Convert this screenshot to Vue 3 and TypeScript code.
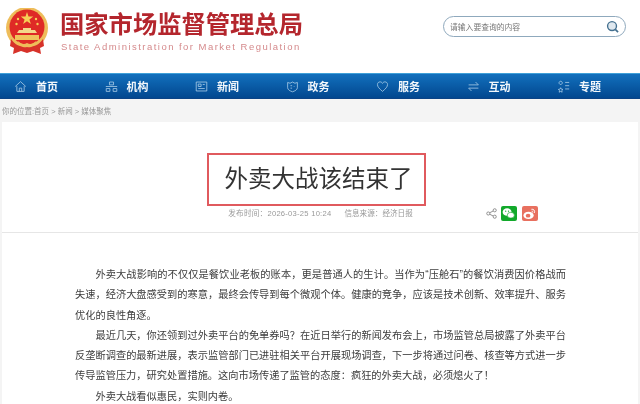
<script setup lang="ts">
interface NavItem {
  label: string
  paths: string[]
}

const navItems: NavItem[] = [
  { label: '首页', paths: ['M1.5 8 8 2l6.500 6', 'M3.500 7.500V14h9V7.500', 'M6.500 14v-4h3v4'] },
  { label: '机构', paths: ['M5.500 2.500h5v3.500h-5z', 'M1.500 10.500h4.500v3.500H1.500z', 'M10 10.500h4.500v3.500H10z', 'M1 8h14'] },
  { label: '新闻', paths: ['M1.500 2.500h13v11h-13z', 'M4 5h3.500v3H4z', 'M9.500 5.500H12', 'M4 10.500h8'] },
  { label: '政务', paths: ['M2 3l3 1 3-1.500L11 4l3-1v6.500c0 2.500-3 4-6 5-3-1-6-2.500-6-5z', 'M5.500 7h2', 'M5.500 10h2', 'M10 7.500v.8'] },
  { label: '服务', paths: ['M8 14C4 10.500 1.800 8.500 1.800 5.500 1.800 3.500 3.300 2.300 5 2.300c1.300 0 2.400.7 3 1.900.6-1.200 1.700-1.900 3-1.900 1.700 0 3.200 1.200 3.200 3.200 0 3-2.200 5-6.200 8.500z'] },
  { label: '互动', paths: ['M2 6h12L10.500 2.500', 'M14 10H2l3.500 3.500'] },
  { label: '专题', paths: ['M4.500 1.500a2 2 0 1 0 .01 0z', 'M4.500 9.500l.9 1.800 2 .3-1.500 1.400.4 2-1.800-1-1.800 1 .4-2-1.500-1.400 2-.3z', 'M10 3h5', 'M10 7h5', 'M10 11h5'] }
]

const articleParas: string[] = [
  '外卖大战影响的不仅仅是餐饮业老板的账本，更是普通人的生计。当作为“压舱石”的餐饮消费因价格战而失速，经济大盘感受到的寒意，最终会传导到每个微观个体。健康的竞争，应该是技术创新、效率提升、服务优化的良性角逐。',
  '最近几天，你还领到过外卖平台的免单券吗？在近日举行的新闻发布会上，市场监管总局披露了外卖平台反垄断调查的最新进展，表示监管部门已进驻相关平台开展现场调查，下一步将通过问卷、核查等方式进一步传导监管压力，研究处置措施。这向市场传递了监管的态度：疯狂的外卖大战，必须熄火了！',
  '外卖大战看似惠民，实则内卷。'
]
</script>

<template>
  <div class="page">
    <header class="site-head">
      <svg class="emblem" viewBox="0 0 44 48">
        <circle cx="22" cy="20" r="21" fill="#eebd5a" />
        <circle cx="22" cy="19" r="17.500" fill="#df2a26" />
        <path d="M22 4l1.500 4.600h4.800l-3.900 2.800 1.500 4.600-3.900-2.800-3.900 2.800 1.500-4.600-3.900-2.800h4.800z" fill="#f6cf57" />
        <circle cx="13" cy="11" r="1.200" fill="#f6cf57" />
        <circle cx="11.500" cy="16" r="1.200" fill="#f6cf57" />
        <circle cx="31" cy="11" r="1.200" fill="#f6cf57" />
        <circle cx="32.500" cy="16" r="1.200" fill="#f6cf57" />
        <path d="M12 25h20l-2-3H26v-2h-8v2h-4z" fill="#f3d98a" />
        <path d="M10 27h24v5H10z" fill="#f0c45c" />
        <path d="M6 31c4 6 9 8 16 8s12-2 16-8l1 7-4 2 1 6-8-3-6 2-6-2-8 3 1-6-4-2z" fill="#d7322a" />
        <path d="M13 33c3 3 6 4 9 2 3 2 6 1 9-2-1 5-5 7-9 6-4 1-8-1-9-6z" fill="#eebd5a" />
      </svg>
      <div class="brand">
        <div class="brand-cn">国家市场监督管理总局</div>
        <div class="brand-en">State Administration for Market Regulation</div>
      </div>
      <div class="search">
        <span class="search-hint">请输入要查询的内容</span>
        <svg class="search-icon" viewBox="0 0 14 14">
          <circle cx="6.500" cy="6.500" r="4.800" fill="#dfe8ef" stroke="#44708f" stroke-width="1.500" />
          <path d="M10 10l3 3" stroke="#44708f" stroke-width="1.800" />
        </svg>
      </div>
    </header>

    <nav class="main-nav">
      <a v-for="item in navItems" :key="item.label" class="nav-item">
        <svg class="nav-icon" viewBox="0 0 16 16">
          <path v-for="d in item.paths" :key="d" :d="d" />
        </svg>
        <span>{{ item.label }}</span>
      </a>
    </nav>

    <div class="crumbs">你的位置:首页 &gt; 新闻 &gt; 媒体聚焦</div>

    <main class="article">
      <div class="title-row">
        <h1 class="title">外卖大战该结束了</h1>
      </div>
      <div class="meta-row">
        <div class="meta">
          <span class="meta-date">发布时间：2026-03-25 10:24</span>
          <span>信息来源：经济日报</span>
        </div>
        <div class="share">
          <svg class="share-icon" viewBox="0 0 12 12">
            <circle cx="2.500" cy="6" r="1.700" />
            <circle cx="9.500" cy="2.500" r="1.700" />
            <circle cx="9.500" cy="9.500" r="1.700" />
            <path d="M4 5.200l4-2M4 6.800l4 2" />
          </svg>
          <span class="badge wechat">
            <svg viewBox="0 0 16 16">
              <ellipse cx="6.500" cy="6.500" rx="4.800" ry="4" fill="#fff" />
              <ellipse cx="10.500" cy="9.800" rx="3.800" ry="3.100" fill="#fff" stroke="#12a92b" stroke-width=".7" />
              <circle cx="5" cy="5.500" r=".7" fill="#12a92b" />
              <circle cx="8" cy="5.500" r=".7" fill="#12a92b" />
            </svg>
          </span>
          <span class="badge weibo">
            <svg viewBox="0 0 16 16">
              <ellipse cx="7" cy="10" rx="5.500" ry="3.800" fill="#fff" />
              <ellipse cx="6.500" cy="10.300" rx="2.500" ry="2" fill="#e8705f" />
              <path d="M10 3.500c2.500-.5 4 1.500 3.300 3.800M10.300 5.500c1-.2 1.500.6 1.300 1.500" fill="none" stroke="#fff" stroke-width="1" />
            </svg>
          </span>
        </div>
      </div>
      <div class="divider"></div>
      <div class="body">
        <p v-for="para in articleParas" :key="para">{{ para }}</p>
      </div>
    </main>
  </div>
</template>

<style>
html,
body {
  margin: 0;
  background: #fff;
}
</style>

<style scoped>
.page {
  width: 640px;
  height: 404px;
  overflow: hidden;
  background: #f4f4f4;
  filter: blur(0.35px);
  font-family: "Liberation Sans", "Noto Sans CJK SC", sans-serif;
}

.site-head {
  height: 73px;
  box-sizing: border-box;
  padding: 8px 14px 0 5px;
  background: #fff;
  display: flex;
  align-items: flex-start;
}

.emblem {
  width: 44px;
  height: 48px;
  flex: none;
}

.brand {
  margin-left: 11px;
  margin-top: 3px;
}

.brand-cn {
  font-size: 24.300px;
  line-height: 28px;
  font-weight: 700;
  color: #b4262d;
  white-space: nowrap;
}

.brand-en {
  margin-top: 2px;
  margin-left: 1px;
  font-size: 9.500px;
  line-height: 12px;
  letter-spacing: 1.470px;
  color: #d58a8c;
  white-space: nowrap;
}

.search {
  margin-left: auto;
  margin-top: 8px;
  width: 183px;
  height: 21px;
  box-sizing: border-box;
  border: 1px solid #8fa9bd;
  border-radius: 11px;
  padding: 0 6px;
  display: flex;
  align-items: center;
  justify-content: space-between;
}

.search-hint {
  font-size: 7.800px;
  color: #777;
}

.search-icon {
  width: 13px;
  height: 13px;
}

.main-nav {
  height: 26px;
  box-sizing: border-box;
  padding-left: 14px;
  border-top: 1px solid #3fa0d8;
  border-bottom: 1px solid #0b4386;
  background: linear-gradient(#1270bd, #02478f);
  display: flex;
}

.nav-item {
  width: 90.500px;
  flex: none;
  display: flex;
  align-items: center;
  font-size: 11px;
  font-weight: 700;
  color: #f2f7fb;
}

.nav-icon {
  width: 13px;
  height: 13px;
  margin-right: 9px;
  fill: none;
  stroke: #a9cbe6;
  stroke-width: 1;
}

.crumbs {
  height: 23px;
  box-sizing: border-box;
  padding: 8px 0 0 2px;
  font-size: 7.500px;
  line-height: 10px;
  color: #999;
}

.article {
  margin: 0 2px;
  height: 282px;
  background: #fff;
}

.title-row {
  padding-top: 31px;
  display: flex;
  justify-content: center;
}

.title {
  margin: 0 0 0 -8px;
  width: 219px;
  height: 53px;
  box-sizing: border-box;
  border: 2px solid #e05a5e;
  padding-left: 5px;
  font-size: 23.500px;
  line-height: 49px;
  font-weight: 400;
  text-align: center;
  color: #333;
}

.meta-row {
  height: 26px;
  position: relative;
  display: flex;
  justify-content: center;
}

.meta {
  margin-left: 1px;
  padding-top: 3px;
  display: flex;
  gap: 13px;
  font-size: 7.600px;
  line-height: 10px;
  color: #999;
}

.meta-date {
  letter-spacing: 0.250px;
}

.share {
  position: absolute;
  left: 484px;
  top: 0;
  display: flex;
  align-items: center;
  gap: 5px;
}

.share-icon {
  width: 11px;
  height: 11px;
  margin-right: -1px;
  fill: none;
  stroke: #888;
  stroke-width: 1;
}

.badge {
  width: 16px;
  height: 15px;
  border-radius: 2px;
  display: flex;
}

.wechat {
  background: #12a92b;
}

.weibo {
  background: #e8705f;
}

.divider {
  height: 1px;
  background: #e6e6e6;
}

.body {
  padding: 32px 72px 0 73px;
  font-size: 10.230px;
  line-height: 20.300px;
  color: #3c3c3c;
}

.body p {
  margin: 0;
  text-indent: 2em;
  text-align: justify;
}
</style>
